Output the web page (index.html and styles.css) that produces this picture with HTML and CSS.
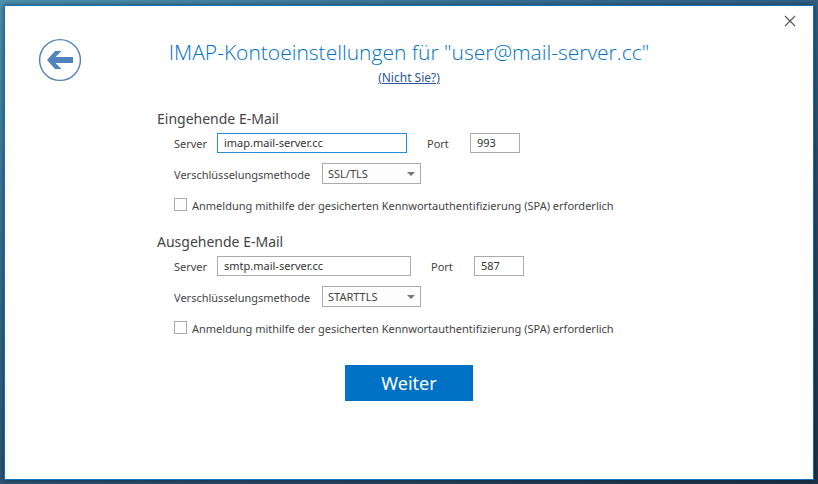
FILE: index.html
```html
<!DOCTYPE html>
<html lang="de">
<head>
  <meta charset="UTF-8">
  <meta name="viewport" content="width=device-width, initial-scale=1.0">
  <title>IMAP-Kontoeinstellungen</title>
  <link rel="stylesheet" href="styles.css">
</head>
<body>
  <main class="dialog">
    <button type="button" class="back" aria-label="Zurück">
      <svg width="44" height="44" viewBox="0 0 44 44">
        <circle cx="22" cy="22" r="20.4" fill="none" stroke="#4f83bb" stroke-width="1.4"/>
        <path d="M9 22 L17 13 H23.500 L17.500 19 H35 V25 H17.500 L23.500 31 H17 Z" fill="#4f83bb"/>
      </svg>
    </button>
    <button type="button" class="close" aria-label="Schließen">
      <svg width="12" height="12" viewBox="0 0 12 12">
        <path d="M1 1 L11 11 M11 1 L1 11" stroke="#555" stroke-width="1.1"/>
      </svg>
    </button>

    <header class="header">
      <h1>IMAP-Kontoeinstellungen für "user@mail-server.cc"</h1>
      <a href="#">(Nicht Sie?)</a>
    </header>

    <form class="form">
      <section class="group">
        <h2>Eingehende E-Mail</h2>
        <div class="row">
          <label class="server-label" for="in-server">Server</label>
          <input type="text" class="text server active" id="in-server" value="imap.mail-server.cc">
          <label class="port-label" for="in-port">Port</label>
          <input type="text" class="text port" id="in-port" value="993">
        </div>
        <div class="row">
          <label class="method-label" for="in-method">Verschlüsselungsmethode</label>
          <select class="method" id="in-method">
            <option>Keine</option>
            <option selected>SSL/TLS</option>
            <option>STARTTLS</option>
          </select>
        </div>
        <div class="row check-row">
          <input type="checkbox" class="check" id="in-spa">
          <label for="in-spa">Anmeldung mithilfe der gesicherten Kennwortauthentifizierung (SPA) erforderlich</label>
        </div>
      </section>

      <section class="group">
        <h2>Ausgehende E-Mail</h2>
        <div class="row">
          <label class="server-label" for="out-server">Server</label>
          <input type="text" class="text server wide" id="out-server" value="smtp.mail-server.cc">
          <label class="port-label" for="out-port">Port</label>
          <input type="text" class="text port" id="out-port" value="587">
        </div>
        <div class="row">
          <label class="method-label" for="out-method">Verschlüsselungsmethode</label>
          <select class="method" id="out-method">
            <option>Keine</option>
            <option>SSL/TLS</option>
            <option selected>STARTTLS</option>
          </select>
        </div>
        <div class="row check-row">
          <input type="checkbox" class="check" id="out-spa">
          <label for="out-spa">Anmeldung mithilfe der gesicherten Kennwortauthentifizierung (SPA) erforderlich</label>
        </div>
      </section>

      <button type="submit" class="next">Weiter</button>
    </form>
  </main>
</body>
</html>
```

FILE: styles.css
```css
* {
  box-sizing: border-box;
}
body {
  display: flex;
  min-height: 100vh;
  margin: 0;
  padding: 5px 4px 4px;
  font-family: "Segoe UI", "Noto Sans", sans-serif;
  font-size: 11px;
  line-height: 20px;
  color: #444;
  background: linear-gradient(155deg, #4d91ad 0%, #356d92 30%, #294c6c 65%, #1d3449 100%);
}
h1, h2 {
  margin: 0;
  font-weight: 400;
}
button {
  padding: 0;
  border: none;
  background: none;
  font-family: inherit;
  cursor: pointer;
}
svg {
  display: block;
}
.dialog {
  position: relative;
  flex: 1;
  padding: 30px 16px;
  background: #fff;
  border: 1px solid #1271bd;
  box-shadow: 0 0 5px rgba(0, 0, 0, 0.5);
}
.back {
  position: absolute;
  top: 32px;
  left: 33px;
}
.close {
  position: absolute;
  top: 9px;
  right: 17px;
}
.header {
  text-align: center;
}
.header h1 {
  font-family: "Segoe UI Light", "Open Sans", sans-serif;
  font-size: 21px;
  font-weight: 300;
  line-height: 32px;
  color: #0072c6;
}
.header a {
  display: inline-block;
  font-size: 12px;
  color: #2b579a;
}
.form {
  max-width: 504px;
  margin: 21px auto 0;
}
.group {
  display: flex;
  flex-direction: column;
  gap: 10px;
  margin-bottom: 17px;
}
.group h2 {
  margin-bottom: -6px;
  font-size: 14px;
}
.row {
  display: flex;
  align-items: center;
  padding-left: 17px;
}
.row label {
  height: 20px;
  padding-top: 1px;
}
.server-label {
  width: 43px;
}
.port-label {
  width: 43px;
  margin-left: 20px;
}
.method-label {
  width: 148px;
}
.text {
  height: 20px;
  padding: 0 6px 1px;
  border: 1px solid #ababab;
  font-family: inherit;
  font-size: 11px;
  color: #333;
  background: #fff;
  outline: none;
}
.server {
  width: 190px;
}
.wide {
  width: 194px;
}
.port {
  width: 50px;
}
.active {
  border-color: #2a8dd4;
}
.method {
  width: 99px;
  height: 21px;
  padding: 0 5px;
  appearance: none;
  border: 1px solid #ababab;
  border-radius: 0;
  font-family: inherit;
  font-size: 11px;
  color: #444;
  background: #fdfdfd url("data:image/svg+xml,%3Csvg xmlns='http://www.w3.org/2000/svg' width='8' height='4'%3E%3Cpath d='M0 0H8L4 4Z' fill='%23777'/%3E%3C/svg%3E") no-repeat right 5px center;
}
.check-row {
  gap: 5px;
  height: 21px;
}
.check {
  width: 13px;
  height: 13px;
  margin: 0;
  appearance: none;
  border: 1px solid #ababab;
  background: #fdfdfd;
}
.next {
  display: block;
  width: 128px;
  height: 36px;
  margin: 27px auto 0;
  font-size: 18px;
  color: #fff;
  background: #0072c6;
}
```
